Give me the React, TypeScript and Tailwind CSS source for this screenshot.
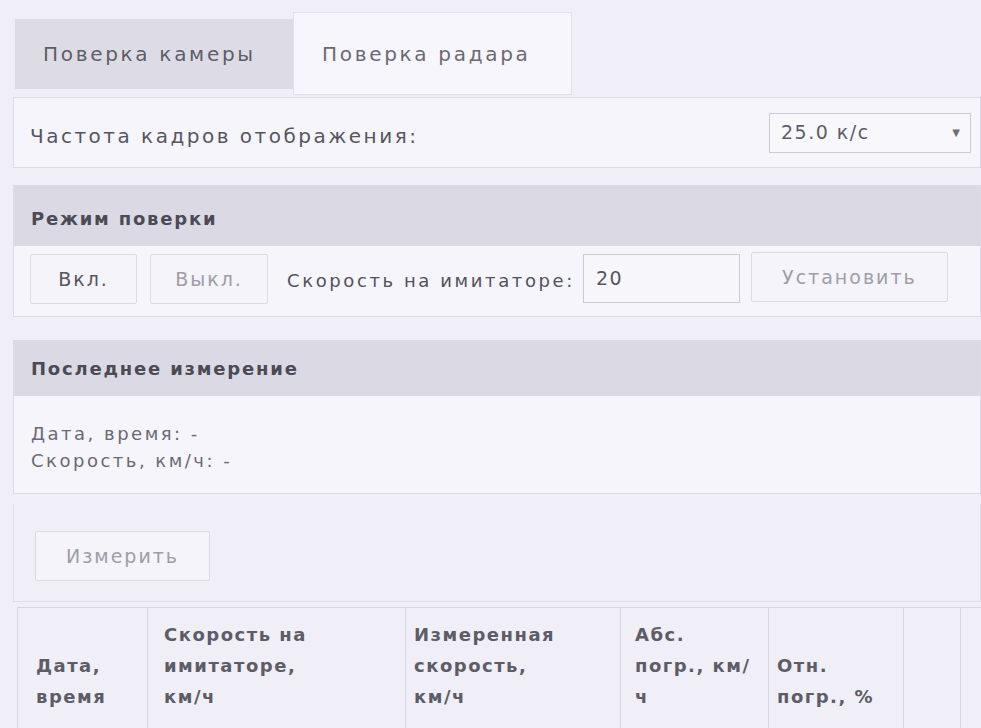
import type { ReactNode } from "react";

const font = "font-['DejaVu_Sans','Liberation_Sans',sans-serif]";

const columns = [
  { w: "w-[130px]", pl: "pl-[18px]", lines: ["Дата,", "время"] },
  { w: "w-[258px]", pl: "pl-[16px]", lines: ["Скорость на", "имитаторе,", "км/ч"] },
  { w: "w-[215px]", pl: "pl-[8px]", lines: ["Измеренная", "скорость,", "км/ч"] },
  { w: "w-[148px]", pl: "pl-[14px]", lines: ["Абс.", "погр., км/", "ч"] },
  { w: "w-[135px]", pl: "pl-[8px]", lines: ["Отн.", "погр., %"] },
  { w: "w-[57px]", pl: "pl-[8px]", lines: [] },
  { w: "w-[40px]", pl: "pl-[8px]", lines: [] },
];

function Button({
  children,
  className,
  muted,
}: {
  children: ReactNode;
  className: string;
  muted?: boolean;
}) {
  return (
    <button
      type="button"
      className={`flex h-[50px] shrink-0 items-center justify-center rounded-[2px] border border-[#dcdbe4] bg-[#f5f4fa] text-[19px] tracking-[2px] ${
        muted ? "text-[#9e9da8]" : "text-[#55545f]"
      } ${className}`}
    >
      {children}
    </button>
  );
}

function PanelHeader({ title, className }: { title: string; className: string }) {
  return (
    <div
      className={`flex items-center bg-[#dbdae4] pl-[17px] text-[18px] font-bold tracking-[1.8px] text-[#4b4a55] ${className}`}
    >
      {title}
    </div>
  );
}

export default function App() {
  return (
    <div
      className={`h-[728px] w-[981px] overflow-hidden bg-[#f0eff7] pt-[12px] pl-[13px] text-[#56555f] ${font}`}
    >
      <div className="w-[968px]">
        {/* tabs */}
        <div className="flex h-[83px] items-center">
          <div className="ml-[2px] flex h-[70px] w-[278px] items-center bg-[#dddce5] pl-[28px] text-[20px] tracking-[2.7px] text-[#5e5d68]">
            Поверка камеры
          </div>
          <div className="flex h-[83px] w-[279px] items-center border border-[#e2e1ea] bg-[#f7f6fc] pl-[28px] text-[20px] tracking-[2.7px] text-[#6a6974]">
            Поверка радара
          </div>
        </div>

        {/* frame rate */}
        <div className="mt-[2px] flex h-[71px] items-center justify-between border border-[#dcdbe4] bg-[#f6f5fb] pl-[16px] pr-[9px]">
          <span className="pt-[6px] text-[20px] tracking-[2.5px]">Частота кадров отображения:</span>
          <div className="flex h-[40px] w-[202px] items-center justify-between border border-[#cbcad4] bg-[#f8f7fc] pl-[11px] pr-[10px]">
            <span className="text-[19px] tracking-[1.5px] text-[#5e5d68]">25.0 к/с</span>
            <span className="text-[10px] text-[#6f6e78]">▼</span>
          </div>
        </div>

        {/* verification mode */}
        <div className="mt-[17px] border border-[#dcdbe4] bg-[#f6f5fb]">
          <PanelHeader title="Режим поверки" className="h-[60px] pt-[4px]" />
          <div className="flex h-[70px] items-start pt-[8px] pl-[16px]">
            <Button className="w-[107px]">Вкл.</Button>
            <Button className="ml-[13px] w-[118px]" muted>
              Выкл.
            </Button>
            <span className="ml-[19px] self-center pb-[10px] text-[18px] tracking-[2.6px] text-[#52515c]">
              Скорость на имитаторе:
            </span>
            <div className="ml-[8px] flex h-[49px] w-[157px] items-center border border-[#cbcad4] bg-[#f7f6fb] pl-[12px] text-[19px] tracking-[1.5px]">
              20
            </div>
            <Button className="ml-[11px] -mt-[2px] w-[197px] text-[#8c8b96]" muted>
              Установить
            </Button>
          </div>
        </div>

        {/* last measurement */}
        <div className="mt-[23px] border border-[#dcdbe4] bg-[#f6f5fb]">
          <PanelHeader title="Последнее измерение" className="h-[55px]" />
          <div className="h-[97px] pt-[24px] pl-[17px] text-[18px] leading-[27px] tracking-[2.5px] text-[#6a6974]">
            <div>Дата, время: -</div>
            <div>Скорость, км/ч: -</div>
          </div>
        </div>

        {/* measure */}
        <div className="mt-[10px] h-[98px] border-x border-b border-[#e0dfe8] pt-[27px] pl-[21px]">
          <Button className="w-[175px]" muted>
            Измерить
          </Button>
        </div>

        {/* results table */}
        <div className="mt-[5px] ml-[4px] flex h-[140px] border-t border-l border-[#d8d7e0]">
          {columns.map((c, i) => (
            <div
              key={i}
              className={`flex shrink-0 flex-col justify-end border-r border-[#d8d7e0] pb-[35px] ${c.w} ${c.pl} text-[18px] font-bold leading-[31px] tracking-[1.5px] whitespace-nowrap text-[#5d5c67]`}
            >
              {c.lines.map((l) => (
                <span key={l}>{l}</span>
              ))}
            </div>
          ))}
        </div>
      </div>
    </div>
  );
}
